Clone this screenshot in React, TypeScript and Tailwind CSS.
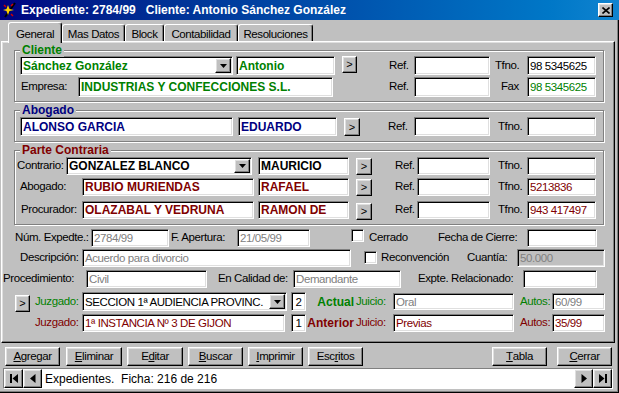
import type { ReactNode } from "react";

const NORM = "text-[11.5px] tracking-[-0.4px]";
const BOLD = "text-[12px] font-bold";
const SUNKEN =
  "border border-t-[#808080] border-l-[#808080] border-b-white border-r-white shadow-[inset_1px_1px_0_#000,inset_-1px_-1px_0_#dfdfdf]";
const RAISED =
  "border border-t-white border-l-white border-b-black border-r-black shadow-[inset_-1px_-1px_0_#808080,inset_1px_1px_0_#dfdfdf] bg-[#c0c0c0]";

type P = { cls?: string; children?: ReactNode; font?: string; bg?: string };

function Label({ cls = "", children }: P) {
  return (
    <span className={`shrink-0 self-stretch flex items-center whitespace-nowrap ${NORM} ${cls}`}>
      {children}
    </span>
  );
}

function Edit({ cls = "", children, font = `${NORM} text-black`, bg = "bg-white" }: P) {
  return (
    <div
      className={`shrink-0 flex items-center overflow-hidden whitespace-nowrap pl-[2px] leading-[14px] ${SUNKEN} ${bg} ${font} ${cls}`}
    >
      {children}
    </div>
  );
}

function Combo({ cls = "", children, font = `${NORM} text-black` }: P) {
  return (
    <div
      className={`shrink-0 flex items-center whitespace-nowrap pl-[2px] pr-[1px] bg-white leading-[14px] ${SUNKEN} ${font} ${cls}`}
    >
      <span className="flex-1 overflow-hidden">{children}</span>
      <div className={`w-[16px] self-stretch my-[1px] flex items-center justify-center ${RAISED}`}>
        <svg width="7" height="4" viewBox="0 0 7 4">
          <path d="M0 0h7L3.5 4z" fill="#000" />
        </svg>
      </div>
    </div>
  );
}

function Arrow({ cls = "" }: P) {
  return (
    <div className={`shrink-0 flex items-center justify-center text-[11px] leading-none ${RAISED} ${cls}`}>
      &gt;
    </div>
  );
}

function Check({ cls = "" }: P) {
  return <div className={`shrink-0 w-[13px] h-[13px] bg-white ${SUNKEN} ${cls}`} />;
}

function Group({ title, color, cls = "", children }: { title: string; color: string; cls?: string; children: ReactNode }) {
  return (
    <div
      className={`relative shrink-0 ml-[12px] w-[590px] flex flex-col border border-[#808080] shadow-[inset_1px_1px_0_#fff,1px_1px_0_#fff] ${cls}`}
    >
      <span className={`absolute left-[5px] -top-[8px] px-[2px] bg-[#c0c0c0] leading-[14px] ${BOLD} ${color}`}>{title}</span>
      {children}
    </div>
  );
}

function Btn({ cls = "", children }: P) {
  return (
    <div className={`shrink-0 h-[19px] flex items-center justify-center ${NORM} ${RAISED} ${cls}`}>{children}</div>
  );
}

function NavBtn({ d }: { d: string }) {
  return (
    <div className={`shrink-0 w-[19px] self-stretch flex items-center justify-center ${RAISED}`}>
      <svg width="10" height="11" viewBox="0 0 10 11">
        <path d={d} fill="#000" />
      </svg>
    </div>
  );
}

function TitleBar() {
  return (
    <div className="h-[20px] shrink-0 flex items-center bg-linear-to-r from-[#000080] to-[#1084d0] pl-[2px] pr-[6px]">
      <svg width="16" height="16" viewBox="0 0 16 16" className="shrink-0">
        <path d="M13 1 L3 15" stroke="#000" strokeWidth="2" />
        <path d="M6 3 L7.5 7 L12 8 L7.5 9 L6 13 L4.5 9 L1 8 L4.5 7 Z" fill="#ffd000" />
        <path d="M9 4 L11 2 M9 12 L11 14 M2 3 L4 5" stroke="#d00000" strokeWidth="1.5" />
      </svg>
      <span className="ml-[3px] text-white font-bold text-[12px] whitespace-pre">
        Expediente: 2784/99   Cliente: Antonio Sánchez González
      </span>
      <div className={`ml-auto w-[15px] h-[14px] flex items-center justify-center ${RAISED}`}>
        <svg width="8" height="7" viewBox="0 0 8 7">
          <path d="M0.5 0.5 L7.5 6.5 M7.5 0.5 L0.5 6.5" stroke="#000" strokeWidth="1.6" />
        </svg>
      </div>
    </div>
  );
}

function Tabs() {
  const tab = `shrink-0 flex items-start justify-center bg-[#c0c0c0] border-l border-t border-r border-l-white border-t-white border-r-black rounded-t-[3px] shadow-[inset_-1px_0_0_#808080] whitespace-nowrap ${NORM}`;
  return (
    <div className="flex items-end h-[21px] shrink-0">
      <div className={`relative z-10 ml-[7px] w-[54px] h-[21px] -mb-[2px] pt-[3px] ${tab}`}>General</div>
      <div className={`w-[63px] h-[17px] pt-[1px] ${tab}`}>Mas Datos</div>
      <div className={`w-[39px] h-[17px] pt-[1px] ${tab}`}>Block</div>
      <div className={`w-[74px] h-[17px] pt-[1px] ${tab}`}>Contabilidad</div>
      <div className={`w-[75px] h-[17px] pt-[1px] ${tab}`}>Resoluciones</div>
    </div>
  );
}

const GREEN_B = `${BOLD} text-[#008000]`;
const NAVY_B = `${BOLD} text-[#000080]`;
const RED_B = `${BOLD} text-[#800000]`;
const BLACK_B = `${BOLD} text-black`;
const GRAY = `${NORM} text-[#808080]`;
const RED = `${NORM} text-[#800000]`;

function Panel() {
  return (
    <div className="shrink-0 w-[614px] h-[302px] flex flex-col border border-t-white border-l-white border-b-black border-r-black shadow-[inset_-1px_-1px_0_#808080,inset_1px_1px_0_#dfdfdf]">
      <Group title="Cliente" color="text-[#008000]" cls="mt-[8px] pb-[4px]">
        <div className="flex items-start mt-[5px] h-[19px]">
          <Combo cls="ml-[5px] w-[213px] h-[19px]" font={GREEN_B}>Sánchez González</Combo>
          <Edit cls="ml-[3px] w-[99px] h-[19px]" font={GREEN_B}>Antonio</Edit>
          <Arrow cls="ml-[7px] w-[15px] h-[17px]" />
          <Label cls="ml-[32px] w-[25px]">Ref.</Label>
          <Edit cls="w-[76px] h-[19px]" />
          <Label cls="ml-[5px] w-[32px]">Tfno.</Label>
          <Edit cls="w-[69px] h-[19px]">98 5345625</Edit>
        </div>
        <div className="flex items-start mt-[2px] h-[20px]">
          <Label cls="ml-[6px] w-[57px]">Empresa:</Label>
          <Edit cls="w-[255px] h-[20px]" font={GREEN_B}>INDUSTRIAS Y CONFECCIONES S.L.</Edit>
          <Label cls="ml-[56px] w-[25px]">Ref.</Label>
          <Edit cls="w-[76px] h-[20px]" />
          <Label cls="ml-[11px] w-[26px]">Fax</Label>
          <Edit cls="w-[69px] h-[20px]" font={`${NORM} text-[#008000]`}>98 5345625</Edit>
        </div>
      </Group>

      <Group title="Abogado" color="text-[#000080]" cls="mt-[8px] pb-[5px]">
        <div className="flex items-start mt-[6px] h-[19px]">
          <Edit cls="ml-[5px] w-[213px] h-[19px]" font={NAVY_B}>ALONSO GARCIA</Edit>
          <Edit cls="ml-[5px] w-[99px] h-[19px]" font={NAVY_B}>EDUARDO</Edit>
          <Arrow cls="ml-[7px] mt-[1px] w-[16px] h-[18px]" />
          <Label cls="ml-[28px] w-[26px]">Ref.</Label>
          <Edit cls="w-[76px] h-[19px]" />
          <Label cls="ml-[8px] w-[29px]">Tfno.</Label>
          <Edit cls="w-[69px] h-[19px]" />
        </div>
      </Group>

      <Group title="Parte Contraria" color="text-[#800000]" cls="mt-[8px] pb-[5px]">
        <div className="flex items-start mt-[6px] h-[18px]">
          <Label cls="ml-[2px] w-[49px]">Contrario:</Label>
          <Combo cls="w-[186px] h-[18px]" font={BLACK_B}>GONZALEZ BLANCO</Combo>
          <Edit cls="ml-[6px] w-[91px] h-[18px]" font={BLACK_B}>MAURICIO</Edit>
          <Arrow cls="ml-[7px] mt-[1px] w-[16px] h-[17px]" />
          <Label cls="ml-[23px] w-[22px]">Ref.</Label>
          <Edit cls="w-[73px] h-[18px]" />
          <Label cls="ml-[8px] w-[29px]">Tfno.</Label>
          <Edit cls="w-[69px] h-[18px]" />
        </div>
        <div className="flex items-start mt-[3px] h-[18px]">
          <Label cls="ml-[5px] w-[62px]">Abogado:</Label>
          <Edit cls="w-[172px] h-[18px]" font={RED_B}>RUBIO MURIENDAS</Edit>
          <Edit cls="ml-[4px] w-[91px] h-[18px]" font={RED_B}>RAFAEL</Edit>
          <Arrow cls="ml-[7px] mt-[1px] w-[16px] h-[17px]" />
          <Label cls="ml-[23px] w-[22px]">Ref.</Label>
          <Edit cls="w-[73px] h-[18px]" />
          <Label cls="ml-[8px] w-[29px]">Tfno.</Label>
          <Edit cls="w-[69px] h-[18px]" font={RED}>5213836</Edit>
        </div>
        <div className="flex items-start mt-[5px] h-[18px]">
          <Label cls="ml-[6px] w-[61px]">Procurador:</Label>
          <Edit cls="w-[172px] h-[18px]" font={RED_B}>OLAZABAL Y VEDRUNA</Edit>
          <Edit cls="ml-[4px] w-[91px] h-[18px]" font={RED_B}>RAMON DE</Edit>
          <Arrow cls="ml-[7px] mt-[2px] w-[16px] h-[17px]" />
          <Label cls="ml-[23px] w-[22px]">Ref.</Label>
          <Edit cls="w-[73px] h-[18px]" />
          <Label cls="ml-[8px] w-[29px]">Tfno.</Label>
          <Edit cls="w-[69px] h-[18px]" font={RED}>943 417497</Edit>
        </div>
      </Group>

      <div className="flex items-start mt-[4px] h-[18px]">
        <Label cls="ml-[13px] w-[76px]">Núm. Expedte.:</Label>
        <Edit cls="w-[78px] h-[18px]" font={GRAY}>2784/99</Edit>
        <Label cls="ml-[2px] w-[66px]">F. Apertura:</Label>
        <Edit cls="w-[73px] h-[18px]" font={GRAY}>21/05/99</Edit>
        <Check cls="ml-[41px]" />
        <Label cls="ml-[5px] w-[69px]">Cerrado</Label>
        <Label cls="w-[89px]">Fecha de Cierre:</Label>
        <Edit cls="w-[70px] h-[18px]" />
      </div>
      <div className="flex items-start mt-[2px] h-[18px]">
        <Label cls="ml-[18px] w-[62px]">Descripción:</Label>
        <Edit cls="w-[269px] h-[18px]" font={GRAY}>Acuerdo para divorcio</Edit>
        <Check cls="ml-[13px] mt-[2px]" />
        <Label cls="ml-[4px] w-[86px]">Reconvención</Label>
        <Label cls="w-[50px]">Cuantía:</Label>
        <Edit cls="w-[88px] h-[18px]" font={GRAY} bg="bg-[#c0c0c0]">50.000</Edit>
      </div>
      <div className="flex items-start mt-[3px] h-[18px]">
        <Label cls="ml-[1px] w-[83px]">Procedimiento:</Label>
        <Edit cls="w-[121px] h-[18px]" font={GRAY}>Civil</Edit>
        <Label cls="ml-[11px] w-[75px]">En Calidad de:</Label>
        <Edit cls="w-[108px] h-[18px]" font={GRAY}>Demandante</Edit>
        <Label cls="ml-[17px] w-[105px]">Expte. Relacionado:</Label>
        <Edit cls="w-[74px] h-[18px]" />
      </div>
      <div className="flex items-start mt-[4px] h-[19px]">
        <Arrow cls="ml-[13px] mt-[3px] w-[15px] h-[17px]" />
        <Label cls="ml-[5px] w-[47px] text-[#008000]">Juzgado:</Label>
        <Combo cls="w-[205px] h-[19px]">SECCION 1ª AUDIENCIA PROVINC.</Combo>
        <Edit cls="ml-[4px] w-[15px] h-[19px] justify-center !pl-0">2</Edit>
        <Label cls={`w-[48px] justify-end ${GREEN_B} !tracking-normal`}>Actual</Label>
        <Label cls="ml-[2px] w-[37px] text-[#008000]">Juicio:</Label>
        <Edit cls="mt-[1px] w-[121px] h-[17px]" font={GRAY}>Oral</Edit>
        <Label cls="ml-[6px] w-[32px] text-[#008000]">Autos:</Label>
        <Edit cls="mt-[1px] w-[53px] h-[17px]" font={GRAY}>60/99</Edit>
      </div>
      <div className="flex items-start mt-[3px] h-[18px]">
        <Label cls="ml-[33px] w-[47px] text-[#800000]">Juzgado:</Label>
        <Edit cls="w-[203px] h-[18px]" font={RED}>1ª INSTANCIA Nº 3 DE GIJON</Edit>
        <Edit cls="ml-[6px] w-[15px] h-[18px] justify-center !pl-0">1</Edit>
        <Label cls={`w-[48px] justify-end ${RED_B} !tracking-normal`}>Anterior</Label>
        <Label cls="ml-[2px] w-[37px] text-[#800000]">Juicio:</Label>
        <Edit cls="w-[121px] h-[18px]" font={RED}>Previas</Edit>
        <Label cls="ml-[6px] w-[32px] text-[#800000]">Autos:</Label>
        <Edit cls="w-[53px] h-[18px]" font={RED}>35/99</Edit>
      </div>
    </div>
  );
}

export default function App() {
  return (
    <div className="w-[619px] h-[393px] bg-[#c0c0c0] flex flex-col overflow-hidden text-black font-['Liberation_Sans',Arial,sans-serif] shadow-[inset_-1px_-1px_0_#000,inset_-2px_-2px_0_#808080]">
      <TitleBar />
      <div className="flex flex-col pl-[1px]">
        <Tabs />
        <Panel />
        <div className="flex mt-[4px] h-[19px]">
          <Btn cls="ml-[4px] w-[55px]"><u>A</u>gregar</Btn>
          <Btn cls="ml-[6px] w-[56px]"><u>E</u>liminar</Btn>
          <Btn cls="ml-[5px] w-[56px]">E<u>d</u>itar</Btn>
          <Btn cls="ml-[5px] w-[55px]"><u>B</u>uscar</Btn>
          <Btn cls="ml-[5px] w-[55px]"><u>I</u>mprimir</Btn>
          <Btn cls="ml-[5px] w-[55px]">Esc<u>r</u>itos</Btn>
          <Btn cls="ml-[129px] w-[55px]"><u>T</u>abla</Btn>
          <Btn cls="ml-[10px] w-[55px]"><u>C</u>errar</Btn>
        </div>
        <div className={`flex mt-[2px] ml-[2px] w-[610px] h-[21px] ${SUNKEN}`}>
          <NavBtn d="M1 1h2v9H1zM9 1v9L3.5 5.5z" />
          <NavBtn d="M7.5 1v9L2 5.5z" />
          <div className="flex-1 bg-white flex items-center pl-[3px] text-[12px] whitespace-pre">
            Expedientes.  Ficha: 216 de 216
          </div>
          <NavBtn d="M2.5 1v9L8 5.5z" />
          <NavBtn d="M1 1v9L6.5 5.5zM7 1h2v9H7z" />
        </div>
      </div>
    </div>
  );
}
